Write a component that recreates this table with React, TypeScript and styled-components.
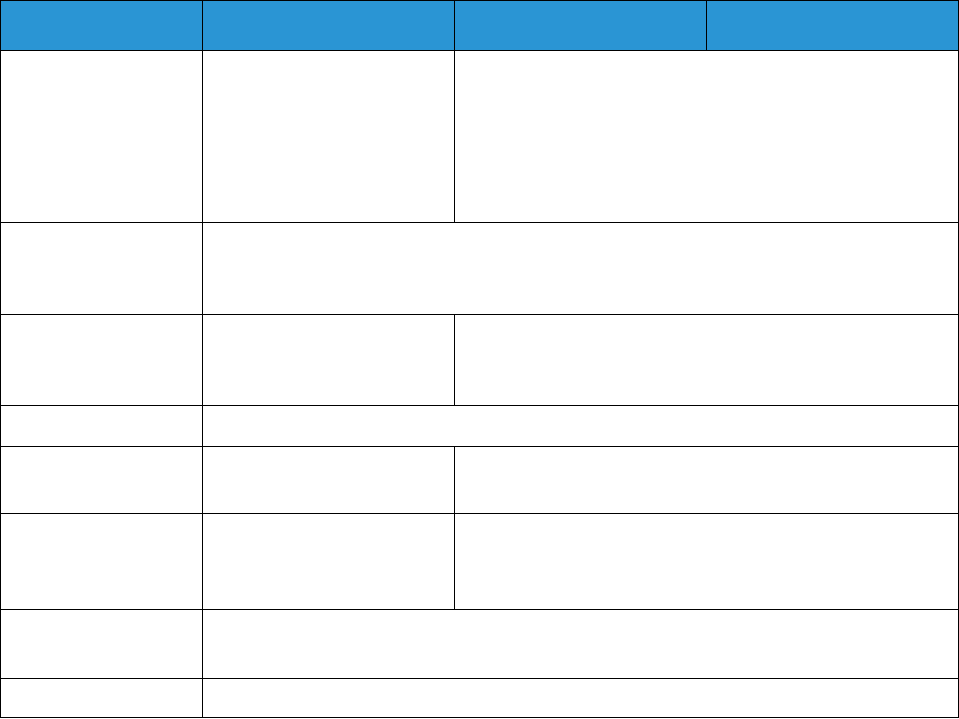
import styled, { createGlobalStyle } from "styled-components";

const GlobalStyle = createGlobalStyle`
  html, body {
    margin: 0;
    padding: 0;
    background: #ffffff;
    font-family: "Liberation Sans", Arial, sans-serif;
  }
`;

// row heights between the 1px rules, body rows only
const rows: { h: number; split: boolean }[] = [
  { h: 171, split: true },
  { h: 91, split: false },
  { h: 90, split: true },
  { h: 40, split: false },
  { h: 66, split: true },
  { h: 95, split: true },
  { h: 68, split: false },
  { h: 38, split: false },
];

const App = () => {
  return (
    <>
      <GlobalStyle />
      <Grid>
        <HeadCell />
        <HeadCell />
        <HeadCell />
        <HeadCell />
        {rows.map((r, i) =>
          r.split ? (
            <Row key={i} $h={r.h}>
              <Cell />
              <Cell />
              <Cell $span={2} />
            </Row>
          ) : (
            <Row key={i} $h={r.h}>
              <Cell />
              <Cell $span={3} />
            </Row>
          )
        )}
      </Grid>
    </>
  );
};

export default App;

const Grid = styled.div`
  width: 959px;
  display: grid;
  grid-template-columns: 201px 251px 251px 251px;
  grid-auto-rows: auto;
  gap: 1px;
  padding: 1px;
  box-sizing: border-box;
  background: #000000;
`;

const HeadCell = styled.div`
  height: 49px;
  background: #2a95d4;
`;

const Row = styled.div<{ $h: number }>`
  grid-column: 1 / -1;
  display: grid;
  grid-template-columns: subgrid;
  gap: 1px;
  height: ${(p) => p.$h}px;
`;

const Cell = styled.div<{ $span?: number }>`
  grid-column: span ${(p) => p.$span ?? 1};
  background: #ffffff;
`;
